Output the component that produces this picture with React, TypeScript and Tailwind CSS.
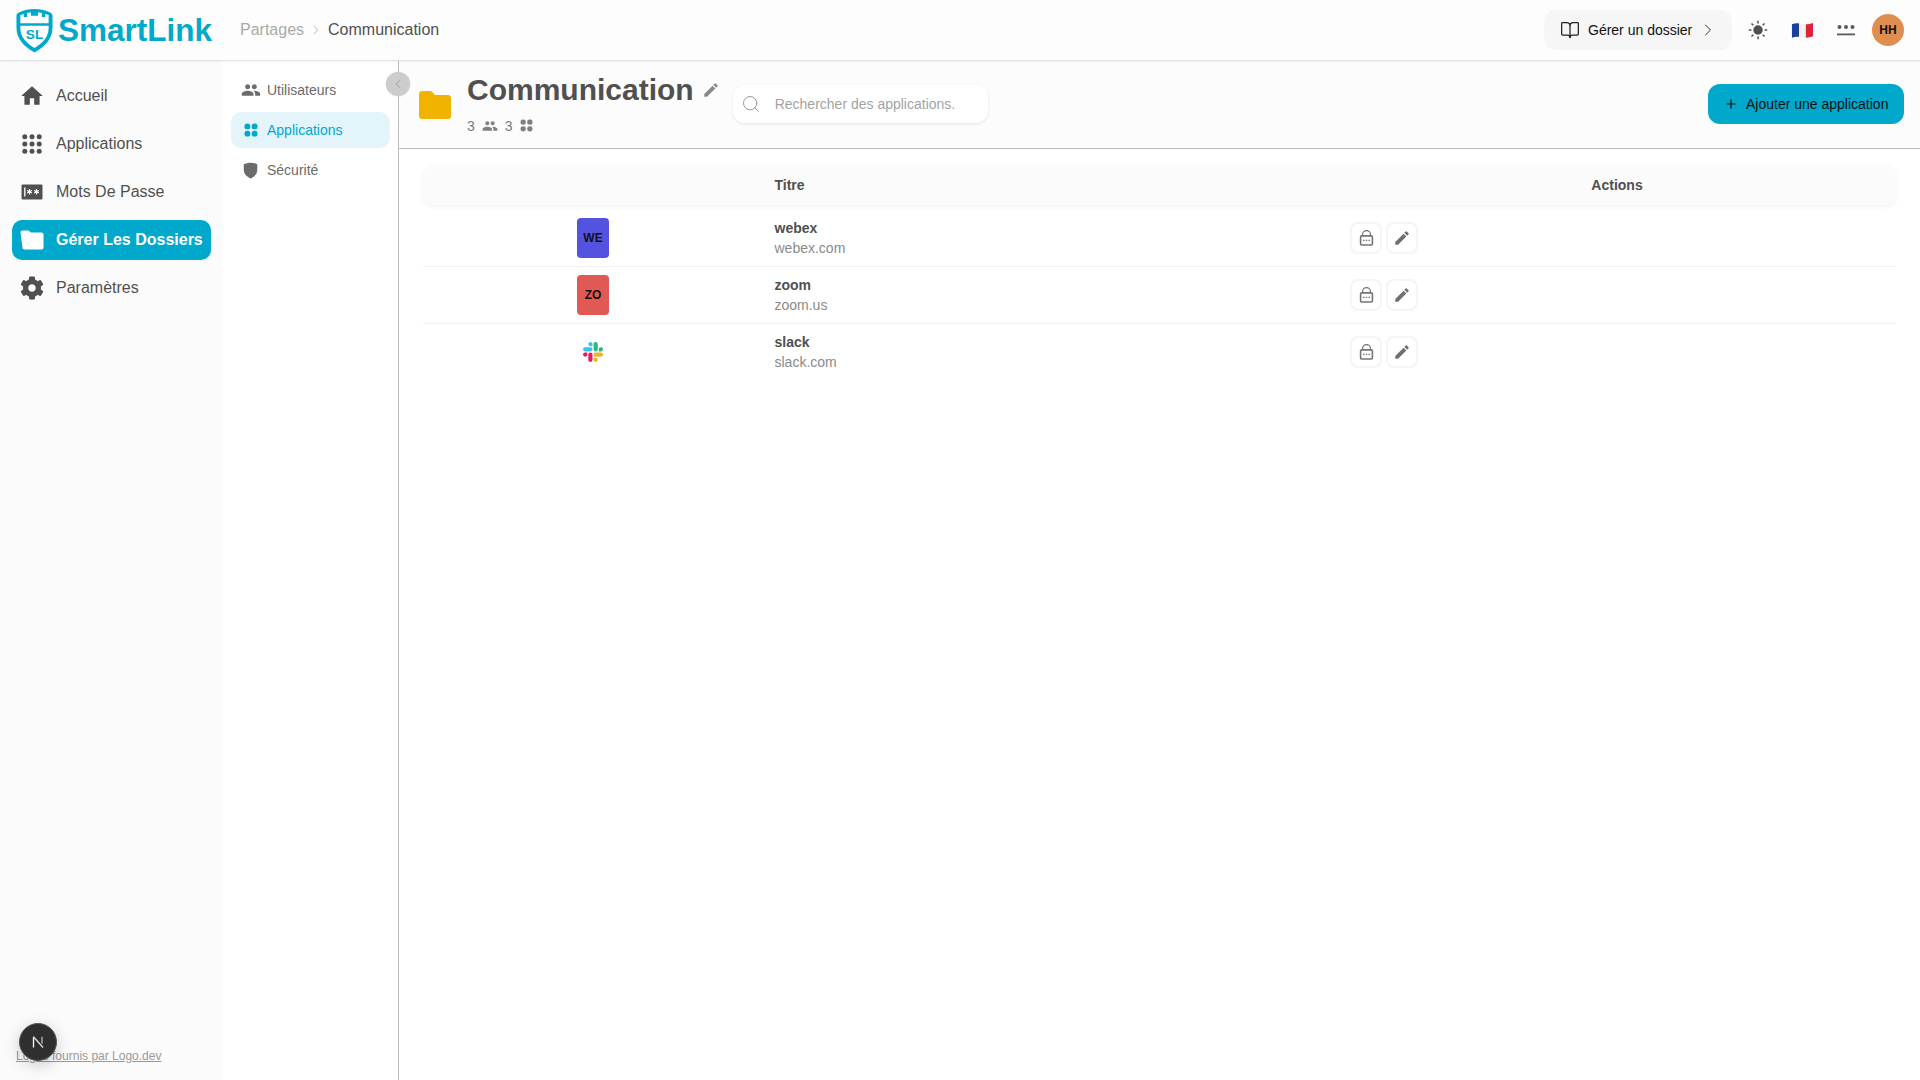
import React from "react";
import { BookOpen, ChevronRight, ChevronLeft, Search, Plus } from "lucide-react";
import { MdHome, MdEdit, MdPeople } from "react-icons/md";
import { FaCog } from "react-icons/fa";

const Apps4 = ({ className }: { className?: string }) => (
  <svg viewBox="0 0 14 14" className={className} fill="currentColor">
    <rect x="0.5" y="0.5" width="5.8" height="5.8" rx="2.6" />
    <rect x="7.7" y="0.5" width="5.8" height="5.8" rx="2.6" />
    <rect x="0.5" y="7.7" width="5.8" height="5.8" rx="2.6" />
    <rect x="7.7" y="7.7" width="5.8" height="5.8" rx="2.6" />
  </svg>
);

const Grid9 = () => (
  <svg viewBox="0 0 20 20" className="w-5 h-5" fill="#505050">
    {[2.8, 10, 17.2].map((y) =>
      [2.8, 10, 17.2].map((x) => <circle key={`${x}-${y}`} cx={x} cy={y} r="2.5" />)
    )}
  </svg>
);

const PassIcon = () => (
  <svg viewBox="0 0 22 16" className="w-[22px] h-4">
    <rect x="0.5" y="0.5" width="21" height="15" rx="1" fill="#505050" />
    <path d="M3.8 3.5v9" stroke="#fff" strokeWidth="1.3" />
    <path d="M8.5 5v5.5M6.2 6.4l4.6 2.7M10.8 6.4L6.2 9.1M15.5 5v5.5M13.2 6.4l4.6 2.7M17.8 6.4l-4.6 2.7" stroke="#fff" strokeWidth="1.2" />
  </svg>
);

const FolderWhite = () => (
  <svg viewBox="0 0 24 20" className="w-6 h-5" fill="#fff">
    <path d="M0.500 2.500C0.500 1.200 1.300.5 2.500.5h6l2.500 2h10.500c1.200 0 2 .8 2 2v13c0 1.200-.8 2-2 2H4.500c-1.200 0-2-.8-2-2L.5 2.500z" />
  </svg>
);

const Shield = () => (
  <svg viewBox="0 0 16 18" className="w-[15px] h-[17px]" fill="#6b6b6b">
    <path d="M8 .6c2.400 0 5 .6 7.200 1.700v6c0 4.200-3 7.500-7.200 9.100C3.800 15.800.8 12.500.8 8.300v-6C3 1.200 5.600.6 8 .6z" />
  </svg>
);

const Lock = () => (
  <svg viewBox="0 0.500 16 18" className="w-[15px] h-[17px]" fill="none">
    <path d="M3.800 7V5.200a4.200 4.200 0 0 1 8.400 0V7" stroke="#757575" strokeWidth="1.300" />
    <rect x="1.700" y="6.700" width="12.600" height="9.700" rx="1.200" stroke="#757575" strokeWidth="1.700" />
    <path d="M4.300 11.500h1.600M7.200 11.500h1.600M10.100 11.500h1.600" stroke="#757575" strokeWidth="1.500" />
  </svg>
);

const Sun = () => (
  <svg viewBox="0 0 20 20" className="w-5 h-5" fill="#4f4f4f">
    <circle cx="10" cy="10" r="4.700" />
    <path d="M10 .8v2.600M10 16.600v2.600M.8 10h2.600M16.600 10h2.600M3.500 3.500l1.800 1.800M14.700 14.700l1.800 1.800M3.500 16.500l1.800-1.800M14.700 5.300l1.800-1.800" stroke="#4f4f4f" strokeWidth="1.500" />
  </svg>
);

const Flag = () => (
  <svg viewBox="0 0 24 18" className="w-[23px] h-[18px]">
    <path d="M1 3c2.500-1 5-1.200 7.500-.9v14c-2.500-.3-5-.1-7.500.9z" fill="#1d3f9e" />
    <path d="M8.500 2.100c2.400.3 4.700.9 7 .9v14c-2.300 0-4.600-.6-7-.9z" fill="#f2f2f2" />
    <path d="M15.500 3c2.500 0 5-.4 7.500-1.400v14c-2.500 1-5 1.400-7.500 1.400z" fill="#e0213a" />
  </svg>
);

const PassDots = () => (
  <svg viewBox="0 0 20 14" className="w-5 h-[14px]">
    <g fill="#5a5a5a">
      <circle cx="3.500" cy="4" r="2" />
      <circle cx="10" cy="4" r="2" />
      <circle cx="16.500" cy="4" r="2" />
      <rect x="1" y="10.500" width="18" height="1.800" />
    </g>
  </svg>
);

const Slack = () => (
  <svg viewBox="0 0 124 124" className="w-5 h-5">
    <path d="M26.400 78.200c0 7.200-5.800 13-13 13s-13-5.800-13-13 5.800-13 13-13h13v13zm6.500 0c0-7.200 5.800-13 13-13s13 5.800 13 13v32.500c0 7.200-5.800 13-13 13s-13-5.800-13-13V78.200z" fill="#E01E5A" />
    <path d="M45.900 26c-7.200 0-13-5.800-13-13s5.800-13 13-13 13 5.800 13 13v13h-13zm0 6.600c7.200 0 13 5.800 13 13s-5.800 13-13 13H13.300c-7.200 0-13-5.800-13-13s5.800-13 13-13h32.600z" fill="#36C5F0" />
    <path d="M98.100 45.600c0-7.200 5.800-13 13-13s13 5.800 13 13-5.800 13-13 13h-13v-13zm-6.500 0c0 7.200-5.800 13-13 13s-13-5.800-13-13V13c0-7.200 5.800-13 13-13s13 5.800 13 13v32.600z" fill="#2EB67D" />
    <path d="M78.600 97.800c7.200 0 13 5.800 13 13s-5.800 13-13 13-13-5.800-13-13v-13h13zm0-6.500c-7.200 0-13-5.800-13-13s5.800-13 13-13h32.600c7.200 0 13 5.800 13 13s-5.800 13-13 13H78.600z" fill="#ECB22E" />
  </svg>
);

const Logo = () => (
  <svg viewBox="0 0 40 46" className="w-[39px] h-[45px]">
    <path
      d="M4 4.500C10 2 14 1 20 1s10 1 16 3.500c1.500.6 2.500 1.500 2.500 3.500v12c0 12-8 20-18.500 25.500C9.500 40 1.500 32 1.500 20V8c0-2 1-2.900 2.500-3.500z"
      fill="#00a9cb"
    />
    <path
      d="M5.500 15.500V7l3.500-.9v3h3.500V5l3.800-.6v3.400h7.400V4.400L27.500 5v4.100H31v-3l3.500.9v8.500z"
      fill="#fff"
    />
    <path d="M5.500 18h29v2.500c0 9-6 15.500-14.500 20.500C11.500 36 5.500 29.500 5.500 20.500z" fill="#fff" />
    <text x="20" y="32" textAnchor="middle" fontFamily="'Liberation Sans', sans-serif" fontWeight="700" fontSize="14" fill="#00a9cb">
      SL
    </text>
  </svg>
);

const mainNav = [
  { label: "Accueil", icon: <MdHome className="w-[26px] h-[26px] text-[#505050]" /> },
  { label: "Applications", icon: <Grid9 /> },
  { label: "Mots De Passe", icon: <PassIcon /> },
  { label: "Gérer Les Dossiers", icon: <FolderWhite />, active: true },
  { label: "Paramètres", icon: <FaCog className="w-6 h-6 text-[#505050]" /> },
];

const rows = [
  { name: "webex", domain: "webex.com", tile: "WE", bg: "bg-[#5353e0]" },
  { name: "zoom", domain: "zoom.us", tile: "ZO", bg: "bg-[#e05a53]" },
  { name: "slack", domain: "slack.com" },
];

export default function App() {
  return (
    <div className="relative h-screen w-full flex flex-col overflow-hidden bg-white font-['Liberation_Sans',sans-serif] text-[#505050]">
      <header className="relative z-10 h-[61px] shrink-0 flex items-center bg-[#fdfdfd] border-b border-[#e4e4e4] shadow-[0_1px_2px_rgba(0,0,0,0.05)]">
        <div className="w-[240px] pl-[15px] flex items-center">
          <Logo />
          <span className="ml-1 mt-[2px] text-[31.5px] leading-none font-bold text-[#00a9cb]">SmartLink</span>
        </div>
        <nav className="flex items-center text-base">
          <span className="text-[#aaaaaa]">Partages</span>
          <ChevronRight className="w-[14px] h-[14px] mx-[5px] text-[#aaaaaa]" strokeWidth={1.5} />
          <span className="text-[#505050]">Communication</span>
        </nav>
        <div className="ml-auto flex items-center pr-4">
          <button className="h-10 w-[188px] rounded-xl bg-[#f6f6f6] flex items-center pl-4 text-sm text-[#111111]">
            <BookOpen className="w-5 h-5 text-[#222222]" strokeWidth={1.5} />
            <span className="ml-2">Gérer un dossier</span>
            <ChevronRight className="w-5 h-5 ml-[6px] text-[#333333]" strokeWidth={1.2} />
          </button>
          <div className="w-11 ml-[4px] flex justify-center"><Sun /></div>
          <div className="w-11 flex justify-center"><Flag /></div>
          <div className="w-11 flex justify-center"><PassDots /></div>
          <div className="w-8 h-8 ml-1 rounded-full bg-[#e08e50] flex items-center justify-center text-xs font-bold text-[#111111]">HH</div>
        </div>
      </header>

      <div className="flex-1 flex min-h-0">
        <aside className="w-[222px] shrink-0 bg-[#fbfbfb] pt-[15px] px-3 flex flex-col gap-2 relative">
          {mainNav.map((n) => (
            <div
              key={n.label}
              className={`h-10 w-[199px] rounded-[10px] flex items-center text-base ${
                n.active ? "bg-[#00a8cc] text-white font-bold" : "text-[#505050]"
              }`}
            >
              <span className="w-11 flex justify-center pr-[4px]">{n.icon}</span>
              <span>{n.label}</span>
            </div>
          ))}
          <a className="mt-auto mb-4 ml-1 text-xs underline text-[#999999]">Logos fournis par Logo.dev</a>
        </aside>

        <div className="relative w-[177px] shrink-0 bg-white border-r border-[#bbbbbb] pt-[11px] pl-[9px] pr-2 flex flex-col gap-1 text-sm">
          <div className="h-9 flex items-center rounded-[10px] text-[#6b6b6b]">
            <span className="w-[27px] ml-[2px] flex justify-center pl-[8px]"><MdPeople className="w-5 h-5 shrink-0" /></span>
            <span className="ml-[7px]">Utilisateurs</span>
          </div>
          <div className="h-9 flex items-center rounded-[10px] bg-[#e3f5fa] text-[#00a8cc]">
            <span className="w-[27px] ml-[2px] flex justify-center pl-[8px]"><Apps4 className="w-[14px] h-[14px] shrink-0" /></span>
            <span className="ml-[7px]">Applications</span>
          </div>
          <div className="h-9 flex items-center rounded-[10px] text-[#6b6b6b]">
            <span className="w-[27px] ml-[2px] flex justify-center pl-[8px]"><Shield /></span>
            <span className="ml-[7px]">Sécurité</span>
          </div>
          <button className="absolute z-10 right-[-12px] top-[11px] w-6 h-6 rounded-full bg-[#cccccc] shadow-[0_0_2px_rgba(0,0,0,0.15)] flex items-center justify-center">
            <ChevronLeft className="w-[14px] h-[14px] text-[#888888]" strokeWidth={1.2} />
          </button>
        </div>

        <main className="flex-1 min-w-0 flex flex-col">
          <div className="h-[88px] shrink-0 bg-[#fcfcfc] border-b border-[#bbbbbb] flex items-center pl-5 pr-4">
            <svg viewBox="0 0 32 28" className="w-8 h-7 shrink-0" fill="#f2b200">
              <path d="M0 3c0-1.700 1.300-3 3-3h8c1 0 1.800.4 2.500 1.200L16 4h13c1.700 0 3 1.300 3 3v18c0 1.700-1.300 3-3 3H3c-1.700 0-3-1.300-3-3z" />
            </svg>
            <div className="ml-4 flex flex-col">
              <div className="flex items-center h-[36px] mt-[-2px]">
                <h1 className="text-[30px] leading-none font-bold text-[#505050]">Communication</h1>
                <MdEdit className="w-[18px] h-[18px] ml-[8px] text-[#8a8a8a]" />
              </div>
              <div className="mt-[8px] flex items-center text-sm text-[#7a7a7a]">
                <span>3</span>
                <MdPeople className="w-4 h-4 ml-[7px] text-[#808080]" />
                <span className="ml-[7px]">3</span>
                <Apps4 className="w-[13px] h-[13px] ml-[7px] text-[#808080]" />
              </div>
            </div>
            <div className="ml-[13px] mt-[-2px] w-[255px] h-[38px] rounded-xl bg-white shadow-[0_1px_3px_rgba(0,0,0,0.1)] flex items-center pl-2">
              <Search className="w-5 h-5 text-[#9a9a9a]" strokeWidth={1.2} />
              <span className="ml-[14px] text-sm text-[#a3a3a3]">Rechercher des applications.</span>
            </div>
            <button className="ml-auto w-[196px] h-10 mt-[-2px] rounded-xl bg-[#00a8cc] flex items-center pl-[16px] text-sm text-[#111111]">
              <Plus className="w-[14px] h-[14px] mr-2" strokeWidth={2} />
              <span>Ajouter une application</span>
            </button>
          </div>

          <div className="pt-4 pl-6 pr-6 text-sm">
            <div className="grid grid-cols-[340px_572px_1fr] h-10 items-center rounded-[10px] bg-[#fbfbfb] shadow-[0_2px_5px_rgba(0,0,0,0.05)] font-bold text-[#505050]">
              <div />
              <div className="pl-[11.5px]">Titre</div>
              <div className="text-center pl-[3px]">Actions</div>
            </div>
            <div className="pt-[5px]">
              {rows.map((r, i) => (
                <div
                  key={r.name}
                  className={`grid grid-cols-[340px_572px_1fr] items-center ${i < 2 ? "h-[57px] border-b border-[#efefef]" : "h-[56px]"}`}
                >
                  <div className="flex justify-center">
                    {r.tile ? (
                      <div className={`w-8 h-10 rounded ${r.bg} flex items-center justify-center text-xs font-bold text-[#111111]`}>{r.tile}</div>
                    ) : (
                      <Slack />
                    )}
                  </div>
                  <div className="pl-[11.5px] leading-5">
                    <div className="font-bold text-[#505050]">{r.name}</div>
                    <div className="text-[#8a8a8a]">{r.domain}</div>
                  </div>
                  <div className="pl-[15px] flex gap-1">
                    <button className="w-8 h-8 rounded-lg border-2 border-[#f5f5f5] bg-white flex items-center justify-center"><Lock /></button>
                    <button className="w-8 h-8 rounded-lg border-2 border-[#f5f5f5] bg-white flex items-center justify-center"><MdEdit className="w-[18px] h-[18px] text-[#707070]" /></button>
                  </div>
                </div>
              ))}
            </div>
          </div>
        </main>
      </div>

      <div className="absolute left-[19px] bottom-[19px] w-[38px] h-[38px] rounded-full bg-[#2f2f2f] border border-[#555555] shadow-[0_4px_16px_rgba(0,0,0,0.2)] flex items-center justify-center">
        <svg viewBox="0 0 14 14" className="w-[14px] h-[14px]" fill="none">
          <path d="M2.500 12.500V1.800" stroke="#fff" strokeWidth="1.300" />
          <path d="M2.500 1.800L12 12.500" stroke="#ddd" strokeWidth="1.300" />
          <path d="M11 1.800v7" stroke="#bbb" strokeWidth="1.300" />
        </svg>
      </div>
    </div>
  );
}
